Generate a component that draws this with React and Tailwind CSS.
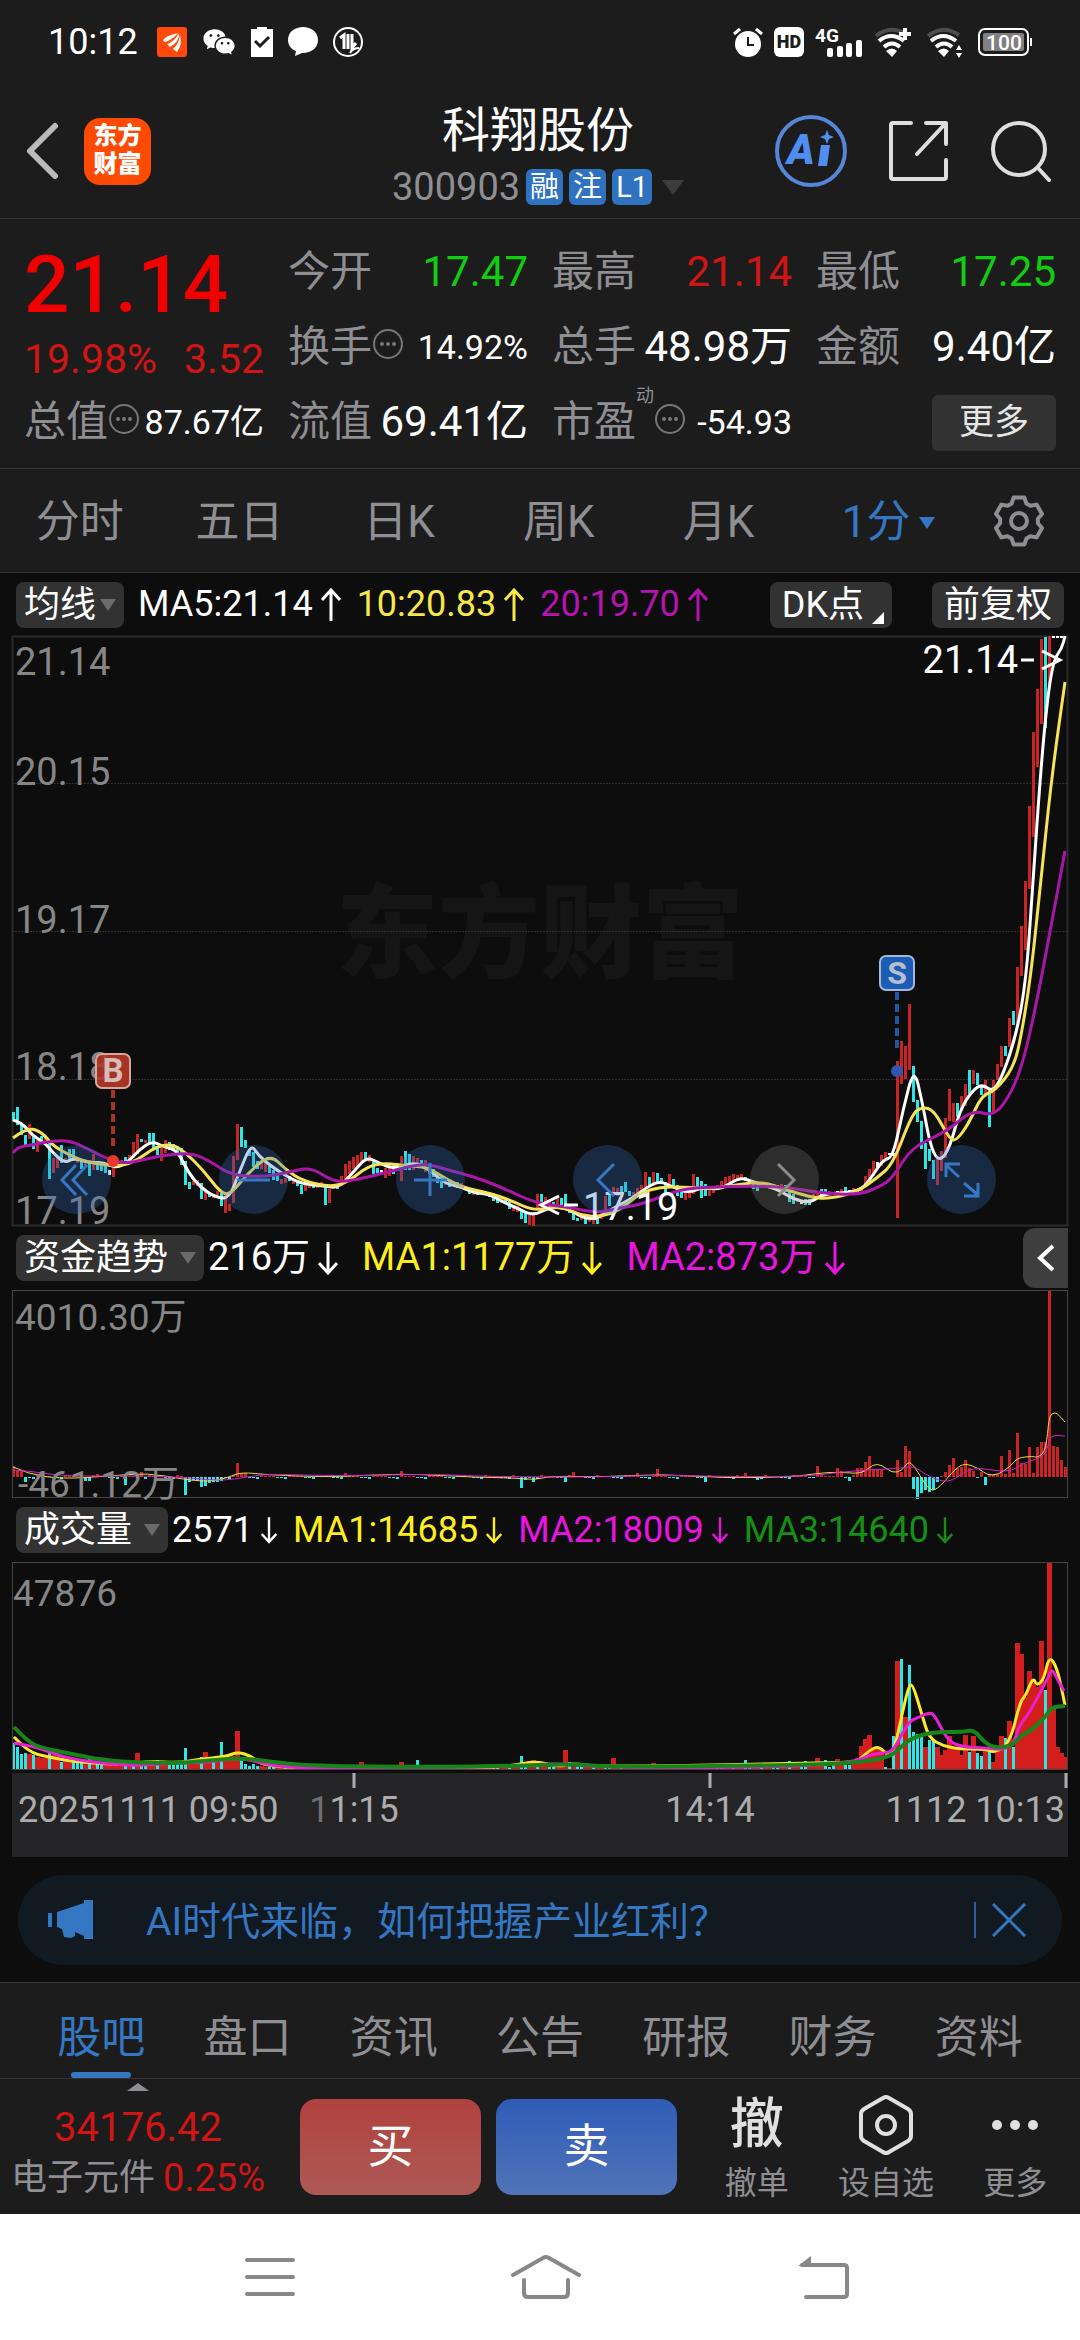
import React from "react";
import { RiWechatFill } from "react-icons/ri";

const RED = "#c92424";
const CYAN = "#2ee6e6";
const barColors = { r: RED, c: CYAN, w: "#ffffff" };

// one candle per 4px: colour, high, low
const candles = `
c476-485 c471-489 c488-499 c499-510 r488-503 c499-513 r502-516 c500-507 r501-507 c507-543 r522-537 r520-532
c509-527 r522-527 c513-524 c513-524 r523-527 c524-533 r526-529 c526-540 r518-534 c526-534 c527-535 c529-537
w534-539 r529-541 r524-531 r524-528 c521-527 r519-527 r506-522 r498-518 c503-506 r504-507 c497-508 c497-512
c510-519 r512-525 r504-517 c506-514 c508-515 c510-517 c512-529 c525-549 c546-553 r545-549 r544-550 c547-563
r555-564 c558-561 r558-562 r555-559 c557-570 r559-577 r568-575 r520-567 r488-524 c491-511 c504-512 c513-520
c516-531 c525-533 r526-533 r524-536 c530-537 c534-544 c538-545 r543-548 r542-547 c540-545 r543-548 c545-550
c549-558 r549-555 r547-552 c548-552 r547-552 r546-551 c550-569 r553-567 r548-553 c548-553 r540-550 r528-545
r525-538 r521-533 r519-531 r516-526 c516-524 r519-526 c524-538 c532-537 w534-537 r532-542 r530-540 c528-538
r527-534 r520-545 c515-534 c518-534 r520-534 r522-530 c524-532 r524-536 c528-538 c533-541 c538-547 c541-552
r545-549 c545-551 r545-549 c546-552 r547-551 c550-553 c552-558 r554-559 c554-559 r554-558 r555-559 c556-561
c557-565 c560-567 r562-567 c564-567 c565-573 r569-575 r570-576 c574-583 c576-587 r579-589 r579-590 r558-574
c558-566 r561-566 r564-571 c566-572 r562-570 c562-570 c558-572 c568-577 c575-584 c582-585 r580-584 c583-588
r583-586 r582-588 c582-588 r574-583 r560-577 c558-570 r551-560 r552-560 c550-558 c546-556 c555-560 r556-560
r552-560 r549-558 r536-552 c541-550 r536-550 c537-548 c542-548 c546-558 r538-548 c543-552 c549-560 c551-562
r552-564 r550-562 r538-558 c541-552 c545-562 c548-560 r552-560 r550-557 r549-554 r545-551 r541-549 r540-546
r538-545 r539-543 r538-542 c541-545 c543-547 c545-553 c547-555 r546-552 w549-551 r547-553 c548-553 c549-554
r548-554 c549-556 c555-566 c558-568 r562-566 w565-568 c563-569 c563-569 r558-564 r555-561 c553-560 c553-557
r555-559 r556-559 w555-557 r553-557 c551-556 w554-557 r552-556 w553-556 r551-555 r540-550 r533-545 r525-540
w526-532 r519-530 r516-524 w517-519 w517-520
r425-582 r405-448 r410-443 r368-434 c430-466 c464-486 c485-513 c507-533 c513-525 c524-543 r522-549 r515-535
r482-522 r453-485 r467-486 c467-481 r460-474 r448-470 c434-458 r434-448 c437-449 c449-459 r444-461 c454-491
r444-478 r428-444 r410-431 c410-420 r382-411 c375-389 r331-387 r290-340 r245-314 r170-253 r96-201 r53-131
r3-88 c1-92 r0-51 w0-2 w0-2 w0-2`.trim().split(/\s+/);

const ma5 = [[1,484],[9,486],[21,500],[33,507],[43,519],[53,527],[62,522],[78,527],[91,526],[103,532],[115,527],[127,514],[140,505],[152,511],[165,514],[176,536],[188,551],[203,561],[217,563],[227,537],[239,508],[246,519],[260,531],[281,544],[293,548],[312,550],[327,552],[343,534],[355,521],[367,527],[382,533],[403,526],[418,534],[432,547],[449,551],[463,557],[477,558],[491,566],[505,572],[521,580],[538,571],[555,572],[571,582],[585,583],[601,572],[621,562],[635,551],[648,545],[661,551],[676,557],[691,551],[708,554],[728,541],[741,546],[765,553],[781,563],[798,567],[811,558],[831,557],[850,554],[861,539],[871,524],[881,521],[891,474],[902,431],[910,465],[919,513],[928,526],[938,511],[948,474],[960,455],[970,448],[981,456],[991,439],[1005,396],[1014,344],[1020,262],[1027,157],[1034,75],[1041,25],[1050,12],[1053,0]];
const ma10 = [[1,502],[16,491],[31,497],[40,509],[57,519],[74,526],[107,531],[126,524],[143,511],[160,508],[174,517],[191,534],[208,556],[218,559],[236,537],[258,518],[274,534],[291,545],[319,551],[336,546],[356,530],[374,527],[394,530],[415,531],[436,544],[453,552],[477,557],[498,564],[522,575],[548,570],[568,579],[588,581],[608,574],[628,557],[648,551],[671,551],[701,553],[728,548],[751,546],[775,554],[798,561],[816,563],[845,556],[865,542],[881,528],[900,478],[910,471],[922,474],[938,504],[945,504],[957,487],[970,459],[983,455],[1002,431],[1010,396],[1020,331],[1031,222],[1041,131],[1053,46]];
const ma20 = [[1,517],[5,511],[21,509],[33,506],[57,504],[78,514],[102,526],[119,527],[150,519],[181,517],[201,527],[219,539],[250,541],[274,537],[298,531],[319,544],[332,546],[356,541],[384,534],[412,527],[436,534],[463,541],[491,552],[523,567],[555,571],[585,577],[608,572],[631,568],[668,553],[701,551],[741,550],[775,551],[808,557],[848,559],[871,549],[881,541],[900,511],[934,496],[960,474],[981,480],[996,463],[1010,431],[1024,370],[1038,296],[1053,215]];

// money flow, spikes of the quiet part by bar index, then every bar from 207 on
const flowSpikes = { 0: 11, 1: 7, 2: 6, 3: -5, 7: 5, 18: -4, 19: -4, 21: 3, 28: -8, 32: 5, 43: -18, 44: -5, 45: -3, 46: -4, 47: -10, 48: -9, 49: -6, 50: -5, 51: -5, 52: -4, 56: 14, 57: 4, 58: 4, 83: 4, 97: 6, 127: -11, 128: -3, 130: -5, 138: -5, 140: 5, 156: 4, 161: 8, 173: -5, 183: 4, 186: -3, 201: 11, 206: 9 };
const flowTail = [6, -1, -4, 2, 9, 9, 15, 21, 8, 8, 7, 0, 0, 0, 17, 5, 31, 26, -12, -22, -16, -13, -15, -13, -5, 1, 5, 12, 19, 9, 10, 17, 9, 6, -1, 5, -8, 3, 3, 3, 21, 3, 27, 4, 44, 14, 13, 30, 4, 30, 35, 35, 187, 31, 30, 17, 10];
const flow1 = [[1,177],[16,184],[50,189],[98,186],[136,183],[170,189],[195,192],[215,188],[229,182],[257,185],[319,187],[360,185],[401,184],[456,187],[505,188],[522,190],[539,186],[594,187],[649,184],[711,188],[780,187],[808,183],[828,182],[850,184],[861,174],[870,175],[880,183],[890,181],[897,170],[906,182],[918,202],[928,197],[943,179],[953,173],[968,179],[975,185],[986,185],[1000,175],[1005,168],[1021,166],[1026,168],[1034,160],[1037,127],[1041,123],[1045,123],[1053,132]];
const flow2 = [[1,180],[18,181],[50,186],[98,186],[140,186],[180,188],[210,191],[235,187],[255,184],[330,186],[420,184],[460,186],[520,187],[590,187],[650,185],[730,187],[800,186],[828,182],[858,180],[890,178],[903,176],[912,184],[936,194],[955,180],[968,178],[985,181],[1000,181],[1010,174],[1022,170],[1034,164],[1037,150],[1041,145],[1053,146]];

const volHead = "c27 c23 c16 c17 r16 c15 r13 r12 r12 c20 r15 r14 c8 r12 r9 c8 c7 c9 r8 c11 r9 c6 c6 r7 r5 r4 r5 r6 c4 r6 c7 r17 c5 c7 r8 r9 c10 r8 r6 c7 c7 c6 c8 c22 r10 r9 r11 c13 r18 r11 c10 r12 c28 r13 r12 r14 r39 c13 c6 c4 c6".split(" ");
const volSpikes = { 87: "r8", 101: "c10", 97: "r8", 127: "c14", 130: "r10", 138: "r20", 139: "c8", 150: "r12", 160: "r7", 183: "c10", 194: "c9", 198: "c9", 201: "r12", 203: "c10", 206: "r11" };
const volTail = "r8 c5 c5 r9 r12 r24 r31 r35 r23 r23 r20 c3 r2 c34 r109 c111 r53 c105 c38 c36 c35 r23 c30 c29 r23 r15 r20 r34 r23 r20 r15 r35 c18 r34 c17 c14 r20 c20 r8 r20 r34 c32 r49 c23 r127 r116 r73 r99 r87 r83 r129 c80 r207 r63 r23 r17 r13".split(" ");
const vol1 = [[2,175],[16,190],[36,195],[64,200],[115,203],[136,199],[167,201],[188,197],[212,195],[226,190],[239,194],[250,203],[284,206],[470,206],[498,204],[525,199],[546,205],[560,201],[587,205],[814,201],[842,200],[848,197],[858,188],[867,184],[877,195],[883,185],[891,148],[897,123],[901,123],[910,153],[917,176],[931,184],[948,187],[975,187],[982,191],[998,181],[1008,140],[1014,133],[1021,115],[1025,124],[1032,117],[1037,94],[1045,105],[1053,143]];
const vol2 = [[2,181],[22,184],[50,195],[80,200],[120,204],[160,201],[200,200],[220,196],[240,198],[265,205],[320,206],[500,205],[540,201],[600,206],[780,205],[842,200],[860,192],[875,191],[882,187],[890,172],[898,159],[905,156],[918,150],[923,154],[936,179],[950,185],[975,186],[990,188],[1001,183],[1008,162],[1016,153],[1034,120],[1040,106],[1045,117],[1052,129]];
const vol3 = [[2,165],[16,180],[30,186],[60,192],[90,198],[130,201],[170,201],[200,198],[232,196],[260,200],[300,204],[420,205],[500,204],[560,202],[600,205],[800,203],[850,200],[878,195],[890,184],[900,176],[920,170],[950,170],[962,168],[972,180],[982,186],[1000,184],[1008,174],[1020,168],[1034,154],[1040,145],[1053,144]];

const flowBars = Array.from({ length: 264 }, (_, i) => {
  if (i >= 207) return flowTail[i - 207];
  return flowSpikes[i] ?? [1, -1, 2, 1, -2, 1, -1][(i * 5) % 7];
});

const volBars = Array.from({ length: 264 }, (_, i) => {
  if (i >= 207) return volTail[i - 207];
  if (i < volHead.length) return volHead[i];
  return volSpikes[i] ?? ["r3", "c4", "r5", "c3", "r4", "r3", "c5"][(i * 3) % 7];
});

// smooth curve through the midpoints
const curve = (pts) => {
  let d = `M${pts[0][0]} ${pts[0][1]}`;
  for (let i = 1; i < pts.length - 1; i++) {
    const [x, y] = pts[i];
    const [nx, ny] = pts[i + 1];
    d += `Q${x} ${y} ${(x + nx) / 2} ${(y + ny) / 2}`;
  }
  const last = pts[pts.length - 1];
  return d + `L${last[0]} ${last[1]}`;
};

const gearPath = () => {
  const p = [];
  for (let k = 0; k < 6; k++) {
    [[-23, 19], [-13, 24], [13, 24], [23, 19]].forEach(([a, r]) => {
      const t = ((k * 60 - 90 + a) * Math.PI) / 180;
      p.push(`${(26 + r * Math.cos(t)).toFixed(1)} ${(26 + r * Math.sin(t)).toFixed(1)}`);
    });
  }
  return `M${p.join("L")}Z`;
};

const Line = ({ pts, color, width = 2 }) => (
  <path d={curve(pts)} fill="none" stroke={color} strokeWidth={width} strokeLinejoin="round" />
);

const Caret = ({ className = "" }) => (
  <svg viewBox="0 0 16 12" className={`w-4 h-3 shrink-0 ${className}`} fill="currentColor">
    <path d="M0 0h16L8 12z" />
  </svg>
);

const Arrow = ({ up, className = "w-5" }) => (
  <svg viewBox="0 0 20 34" className={`h-[34px] ${className}`} fill="none" stroke="currentColor" strokeWidth="3">
    {up ? <path d="M10 33V2M1 12l9-10 9 10" /> : <path d="M10 1v31M1 22l9 10 9-10" />}
  </svg>
);

const Value = ({ text, up, color, arrow }) => (
  <span className={`flex items-center gap-2 ${color}`}>
    {text}
    <Arrow up={up} className={arrow} />
  </span>
);

const Pill = ({ children, caret = true, className = "" }) => (
  <button className={`flex items-center h-[46px] px-2 rounded-lg bg-[#323232] text-white text-[36px] leading-none ${className}`}>
    {children}
    {caret && <Caret className="text-[#6b6b6b]" />}
  </button>
);

const Dots = () => (
  <svg viewBox="0 0 32 32" className="w-8 h-8 mb-2 shrink-0" fill="#77777b">
    <circle cx="16" cy="16" r="14" fill="none" stroke="#77777b" strokeWidth="2" />
    <circle cx="10" cy="16" r="2" /><circle cx="16" cy="16" r="2" /><circle cx="22" cy="16" r="2" />
  </svg>
);

const Quote = ({ label, value, color = "text-white", info, sup }) => (
  <div className="flex items-center justify-between h-[75px] whitespace-nowrap">
    <div className="flex items-center text-[42px] text-[#8e8e93]">
      {label}
      {sup && <sup className="text-[18px] self-start leading-none">{sup}</sup>}
      {info && <Dots />}
    </div>
    <div className={`${info ? "text-[34px]" : "text-[42px]"} ${color}`}>{value}</div>
  </div>
);

const Wifi = ({ children }) => (
  <svg viewBox="0 0 37 31" className="w-[37px] h-[31px]" fill="none" strokeWidth="4">
    <path d="M2 9Q17 -3 33 8" stroke="#4d4d4d" />
    <path d="M5 14q12-10 25 0M10 20q8-7 16 0" stroke="#fff" />
    <path d="M12 24q6-5 11 0l-5 6z" fill="#fff" />
    {children}
  </svg>
);

const StatusBar = () => (
  <div className="flex items-center justify-between h-[84px] pl-12 pr-12 text-white">
    <div className="flex items-center gap-[15px]">
      <span className="text-[36px] mr-1">10:12</span>
      <svg viewBox="0 0 30 30" className="w-[30px] h-[30px]">
        <rect width="30" height="30" rx="3" fill="#ff4a0c" />
        <path d="M6 14q1-5 15-8q-6 7-13 9zM10 17q7-2 12-11q1 8-9 14zM16 22q6-5 7-14q3 9-3 17z" fill="#fff" />
      </svg>
      <RiWechatFill className="w-[34px] h-[34px]" />
      <svg viewBox="0 0 22 30" className="w-[22px] h-[30px]">
        <path d="M0 2h6V0h10v2h6v28H0z" fill="#fff" />
        <path d="M4 14l5 5 9-9" fill="none" stroke="#1c1c1c" strokeWidth="3" />
      </svg>
      <svg viewBox="0 0 30 30" className="w-[30px] h-[30px]" fill="#fff">
        <path d="M15 0c8 0 15 5 15 13s-7 13-15 13h-1l-7 3 1-5C3 22 0 18 0 13 0 5 7 0 15 0z" />
      </svg>
      <svg viewBox="0 0 30 30" className="w-[30px] h-[30px]" fill="none" stroke="#fff" strokeWidth="2">
        <circle cx="15" cy="15" r="14" />
        <path d="M7 11l4-3v14M15 7v15M19 7v14l4-5" strokeWidth="3" />
        <path d="M17 26q3-5 9-5" />
      </svg>
    </div>
    <div className="flex items-center gap-[11px]">
      <svg viewBox="0 0 30 30" className="w-[30px] h-[30px]" fill="#fff">
        <circle cx="15" cy="17" r="13" />
        <path d="M1 7l6-5M29 7l-6-5" stroke="#fff" strokeWidth="3" />
        <path d="M15 10v8h6" fill="none" stroke="#1c1c1c" strokeWidth="2" />
      </svg>
      <span className="w-[30px] h-[30px] rounded-md bg-white text-[#1c1c1c] text-[18px] leading-[30px] text-center font-black">HD</span>
      <svg viewBox="0 0 48 32" className="w-12 h-8 overflow-visible" fill="#fff">
        <text x="0" y="16" fontSize="19" fontWeight="700">4G</text>
        <rect x="12" y="22" width="6" height="9" rx="2" /><rect x="22" y="20" width="6" height="11" rx="2" />
        <rect x="31" y="17" width="6" height="14" rx="2" /><rect x="41" y="14" width="6" height="17" rx="2" />
      </svg>
      <Wifi><path d="M25 7h12M31 1v12" stroke="#fff" /></Wifi>
      <div className="px-1"><Wifi><path d="M33 18l3 5h-6zM33 31l3-5h-6z" fill="#fff" /></Wifi></div>
      <svg viewBox="0 0 54 28" className="w-[54px] h-7">
        <rect x="1" y="1" width="49" height="26" rx="6" fill="none" stroke="#fff" strokeWidth="2" />
        <rect x="5" y="5" width="41" height="18" rx="2" fill="#808080" />
        <path d="M53 10v8" stroke="#fff" strokeWidth="2" />
        <text x="26" y="22" textAnchor="middle" fontSize="21" fontWeight="500" fill="#fff">100</text>
      </svg>
    </div>
  </div>
);

const Badge = ({ children }) => (
  <span className="h-9 min-w-9 px-1 rounded-md bg-[#2f72c0] text-white text-[29px] leading-9 text-center">{children}</span>
);

const Header = () => (
  <header className="grid grid-cols-[1fr_auto_1fr] items-center h-[135px] pl-6 pr-7 border-b border-[#333]">
    <div className="flex items-center gap-6">
      <button aria-label="返回">
        <svg viewBox="0 0 36 60" className="w-9 h-[60px]" fill="none" stroke="#bbb" strokeWidth="6" strokeLinecap="round" strokeLinejoin="round">
          <path d="M31 5L6 30l25 25" />
        </svg>
      </button>
      <div className="w-[67px] h-[67px] rounded-2xl bg-[#ff4a04] text-white text-[24px] leading-7 font-black text-center pt-1">
        东方<br />财富
      </div>
    </div>
    <div className="flex flex-col items-center gap-2 pt-1">
      <h1 className="text-[48px] leading-[60px] text-white">科翔股份</h1>
      <div className="flex items-center gap-[6px] text-[38px] leading-9 text-[#8e8e93]">
        300903
        <Badge>融</Badge>
        <Badge>注</Badge>
        <Badge>L1</Badge>
        <svg viewBox="0 0 22 15" className="w-[22px] h-[15px] ml-1" fill="#3c3c3c"><path d="M0 0h22L11 15z" /></svg>
      </div>
    </div>
    <div className="flex items-center justify-end gap-10">
      <button aria-label="AI">
        <svg viewBox="0 0 74 74" className="w-[74px] h-[74px]" fill="#4f8ef0">
          <circle cx="37" cy="37" r="34" fill="none" stroke="#5586d8" strokeWidth="4" />
          <text x="13" y="50" fontSize="42" fontWeight="900" fontStyle="italic">A</text>
          <path d="M47 31h9l-3 21h-9zM53 16l2 5 5 2-5 2-2 5-2-5-5-2 5-2z" />
        </svg>
      </button>
      <button aria-label="分享">
        <svg viewBox="0 0 62 62" className="w-[62px] h-[62px]" fill="none" stroke="#dedede" strokeWidth="4" strokeLinecap="round" strokeLinejoin="round">
          <path d="M23 3H5q-2 0-2 2v52q0 2 2 2h51q2 0 2-2V40M38 3h20v21M57 4L29 34" />
        </svg>
      </button>
      <button aria-label="搜索">
        <svg viewBox="0 0 62 62" className="w-[62px] h-[62px]" fill="none" stroke="#dedede" strokeWidth="4" strokeLinecap="round">
          <circle cx="29" cy="29" r="26" />
          <path d="M48 48l11 12" />
        </svg>
      </button>
    </div>
  </header>
);

const Quotes = () => (
  <section className="grid grid-cols-4 gap-x-6 px-6 pt-4 pb-2 border-b border-[#333]">
    <div className="row-span-2 text-[#e60f0f] whitespace-nowrap">
      <div className="text-[80px] leading-[100px] font-medium text-[#f00000]">21.14</div>
      <div className="flex justify-between text-[41px] leading-[48px] text-[#d01515]">
        <span>19.98%</span><span>3.52</span>
      </div>
    </div>
    <Quote label="今开" value="17.47" color="text-[#12cc12]" />
    <Quote label="最高" value="21.14" color="text-[#d01515]" />
    <Quote label="最低" value="17.25" color="text-[#12cc12]" />
    <Quote label="换手" value="14.92%" info />
    <Quote label="总手" value="48.98万" />
    <Quote label="金额" value="9.40亿" />
    <Quote label="总值" value="87.67亿" info />
    <Quote label="流值" value="69.41亿" />
    <Quote label="市盈" value="-54.93" info sup="动" />
    <button className="self-center justify-self-end w-[124px] h-14 rounded-md bg-[#323232] text-[#e6e6e6] text-[35px]">更多</button>
  </section>
);

const Periods = () => (
  <nav className="flex items-center h-[104px] text-[44px] text-[#8e8e93] border-b border-[#333]">
    <div className="grid grid-cols-6 flex-1 pt-1">
      {["分时", "五日", "日K", "周K", "月K"].map((t) => (
        <button key={t}>{t}</button>
      ))}
      <button className="flex items-center justify-center gap-2 pl-5 text-[#3677c4]">1分<Caret /></button>
    </div>
    <button aria-label="设置" className="w-[122px] flex justify-center">
      <svg viewBox="0 0 52 52" className="w-[52px] h-[52px]" fill="none" stroke="#8e8e93" strokeWidth="4" strokeLinejoin="round">
        <path d={gearPath()} />
        <circle cx="26" cy="26" r="8" />
      </svg>
    </button>
  </nav>
);

const RoundButton = ({ label, muted, children }) => (
  <button aria-label={label} className={`w-[69px] h-[69px] rounded-full ${muted ? "bg-[#787878]/30" : "bg-[#326ebe]/30"}`}>
    <svg viewBox="0 0 69 69" fill="none" stroke={muted ? "#8c8c8c" : "#3677c4"} strokeWidth="3">{children}</svg>
  </button>
);

const PriceChart = () => (
  <div className="relative mx-3">
    <svg viewBox="0 0 1056 590" className="block w-full overflow-visible">
      <text x="528" y="334" textAnchor="middle" fontSize="102" fontWeight="900" fill="#151515">东方财富</text>
      <rect x="0.5" y="0.5" width="1055" height="589" fill="none" stroke="#2a2a2a" strokeWidth="2" />
      <path d="M0 147.5h1056M0 295.5h1056M0 443.5h1056" stroke="#2e2e2e" strokeDasharray="2 1" />
      <g fontSize="38" fill="#868686">
        <text x="3" y="39">21.14</text>
        <text x="3" y="149">20.15</text>
        <text x="3" y="297">19.17</text>
        <text x="3" y="444">18.18</text>
        <text x="3" y="588">17.19</text>
      </g>
      {candles.map((c, i) => {
        const [top, bottom] = c.slice(1).split("-").map(Number);
        return <rect key={i} x={i * 4} y={top} width="3" height={bottom - top} fill={barColors[c[0]]} />;
      })}
      <Line pts={ma5} color="#ffffff" width={3} />
      <Line pts={ma10} color="#f6e35a" width={3} />
      <Line pts={ma20} color="#aa17a8" width={3} />
      <path d="M101 454v58" stroke="#a83226" strokeWidth="4" strokeDasharray="8 4" />
      <circle cx="101" cy="525" r="6" fill="#e8372c" />
      <rect x="84" y="418" width="34" height="34" rx="6" fill="#b53a29" fillOpacity="0.9" stroke="#d9a69d" strokeWidth="2" />
      <text x="101" y="446" textAnchor="middle" fontSize="33" fontWeight="700" fill="#d8bbb6">B</text>
      <path d="M885 356v56" stroke="#2257a0" strokeWidth="4" strokeDasharray="8 4" />
      <circle cx="885" cy="435" r="6" fill="#3156ad" />
      <rect x="868" y="320" width="34" height="34" rx="6" fill="#1c5cb4" stroke="#a3b8d6" strokeWidth="2" />
      <text x="885" y="348" textAnchor="middle" fontSize="32" fontWeight="700" fill="#b4bfcf">S</text>
      <g fontSize="38" fill="#fff">
        <text x="571" y="584">17.19</text>
        <text x="1006" y="37" textAnchor="end">21.14</text>
      </g>
      <path d="M547 560l-18 9 18 9M552 569h14M1009 24h13M1030 15l18 9-18 9" fill="none" stroke="#fff" strokeWidth="3" />
    </svg>
    <div className="absolute bottom-3 left-[30px] right-[72px] flex justify-between">
      <RoundButton label="最左"><path d="M34 20L20 35l14 15M45 20L31 35l14 15" /></RoundButton>
      <RoundButton label="缩小"><path d="M18 35h33" /></RoundButton>
      <RoundButton label="放大"><path d="M18 35h33M34 18v33" /></RoundButton>
      <RoundButton label="左移"><path d="M41 19L25 35l16 16" /></RoundButton>
      <RoundButton label="右移" muted><path d="M28 19l16 16-16 16" /></RoundButton>
      <RoundButton label="全屏"><path d="M32 32L19 20M19 32V19h14M37 38l14 12M51 38v13H37" /></RoundButton>
    </div>
  </div>
);

const FlowChart = () => (
  <svg viewBox="0 0 1056 208" className="block mx-3 w-[calc(100%-24px)] overflow-visible">
    {flowBars.map((v, i) => (
      <rect key={i} x={i * 4} y={v > 0 ? 187 - v : 187} width="3" height={Math.abs(v)} fill={v > 0 ? RED : CYAN} />
    ))}
    <Line pts={flow1} color="#ead94a" width={1} />
    <Line pts={flow2} color="#cf1fcb" width={1} />
    <rect x="0.5" y="0.5" width="1055" height="207" fill="none" stroke="#444" />
    <g fontSize="37" fill="#868686">
      <text x="3" y="40">4010.30万</text>
      <text x="6" y="207">-461.12万</text>
    </g>
  </svg>
);

const VolumeChart = () => (
  <svg viewBox="0 0 1056 208" className="block mx-3 w-[calc(100%-24px)]">
    {volBars.map((b, i) => {
      const h = Number(b.slice(1));
      const red = b[0] === "r";
      return <rect key={i} x={red ? i * 4 - 1 : i * 4} y={208 - h} width={red ? 5 : 3} height={h} fill={red ? "#d41d1d" : CYAN} />;
    })}
    <Line pts={vol1} color="#ffe92b" width={3} />
    <Line pts={vol2} color="#e81fd4" width={3} />
    <Line pts={vol3} color="#18851a" width={4} />
    <rect x="0.5" y="0.5" width="1055" height="207" fill="none" stroke="#444" />
    <text x="1" y="44" fontSize="37" fill="#868686">47876</text>
  </svg>
);

const TimeAxis = () => (
  <svg viewBox="0 0 1056 84" className="block mx-3 mt-[3px] w-[calc(100%-24px)] bg-[#242426]" fontSize="36" fill="#acacac">
    <path d="M342 0v15M698 0v15M1054 0v15" stroke="#acacac" strokeWidth="3" />
    <text x="6" y="49">20251111 09:50</text>
    <text x="342" y="49" textAnchor="middle"><tspan fill="#6f6f70">1</tspan>1:15</text>
    <text x="698" y="49" textAnchor="middle">14:14</text>
    <text x="1053" y="49" textAnchor="end">1112 10:13</text>
  </svg>
);

const Banner = () => (
  <div className="flex items-center mx-[18px] mt-[18px] mb-[17px] h-[90px] pl-[30px] pr-9 rounded-full bg-[#111921] text-[#3677c4]">
    <svg viewBox="0 0 46 40" className="w-[46px] h-10" fill="#3677c4">
      <path d="M0 13h4v14H0zM9 12L36 3V0h9v39h-9v-3l-9-4v4l-4 2-7-1-2-8-5-2z" />
    </svg>
    <a href="#" className="flex-1 pl-[52px] pt-1 text-[39px] whitespace-nowrap">AI时代来临，如何把握产业红利？</a>
    <button aria-label="关闭" className="flex items-center gap-4 border-l-2 border-[#2c5f9c] pl-4 h-9">
      <svg viewBox="0 0 34 34" className="w-[34px] h-[34px]" stroke="#3677c4" strokeWidth="3"><path d="M1 1l32 32M33 1L1 33" /></svg>
    </button>
  </div>
);

const InfoTabs = () => (
  <nav className="flex h-24 px-7 text-[44px] bg-[#1c1c1c] border-t border-[#3a3a3a] text-[#8e8e93]">
    {["股吧", "盘口", "资讯", "公告", "研报", "财务", "资料"].map((t, i) => (
      <button key={t} className={`relative flex-1 pt-4 ${i === 0 ? "text-[#3677c4]" : ""}`}>
        {t}
        {i === 0 && <span className="absolute bottom-0 left-1/2 -translate-x-1/2 w-[60px] h-[6px] rounded-full bg-[#3677c4]" />}
      </button>
    ))}
  </nav>
);

const Action = ({ label, children }) => (
  <button className="flex-1 flex flex-col items-center gap-2 pt-1 text-[32px] text-[#8e8e93]">
    <span className="flex items-center justify-center h-[60px] text-[54px] leading-none text-[#e0e0e0] font-medium">{children}</span>
    <span className="leading-10">{label}</span>
  </button>
);

const TradeBar = () => (
  <footer className="flex items-center h-[136px] bg-[#1c1c1c] border-t border-[#333]">
    <div className="relative w-[276px] mr-6 pt-3 text-center text-[#d01515] whitespace-nowrap">
      <svg viewBox="0 0 22 8" className="absolute -top-2 left-1/2 w-[22px] h-2 -translate-x-1/2" fill="#8e8e93"><path d="M11 0l11 8H0z" /></svg>
      <div className="text-[40px] leading-[50px]">34176.42</div>
      <div className="flex items-center justify-center gap-2 text-[38px] leading-[50px]">
        <span className="text-[36px] text-[#8e8e93]">电子元件</span>0.25%
      </div>
    </div>
    <div className="flex gap-[15px]">
      <button className="w-[181px] h-24 rounded-2xl bg-linear-to-b from-[#b0413e] to-[#ae5955] text-white text-[46px]">买</button>
      <button className="w-[181px] h-24 rounded-2xl bg-linear-to-b from-[#2f5cb8] to-[#5173b8] text-white text-[46px]">卖</button>
    </div>
    <div className="flex flex-1 pl-[15px]">
      <Action label="撤单">撤</Action>
      <Action label="设自选">
        <svg viewBox="0 0 56 60" className="w-14 h-[60px]" fill="none" stroke="#e0e0e0" strokeWidth="4" strokeLinejoin="round">
          <path d="M25 3q3-2 6 0l19 11q3 2 3 5v22q0 3-3 5L31 57q-3 2-6 0L6 46q-3-2-3-5V19q0-3 3-5z" />
          <circle cx="28" cy="30" r="9" />
        </svg>
      </Action>
      <Action label="更多">
        <svg viewBox="0 0 48 12" className="w-12 h-3" fill="#e0e0e0">
          <circle cx="6" cy="6" r="5" /><circle cx="24" cy="6" r="5" /><circle cx="42" cy="6" r="5" />
        </svg>
      </Action>
    </div>
  </footer>
);

const SystemNav = () => (
  <div className="flex items-center justify-between h-[126px] pl-[244px] pr-[230px] bg-white">
    <button aria-label="菜单">
      <svg viewBox="0 0 52 40" className="w-[52px] h-10" stroke="#888" strokeWidth="4" strokeLinecap="round"><path d="M3 3h46M3 20h46M3 37h46" /></svg>
    </button>
    <button aria-label="主页">
      <svg viewBox="0 0 72 46" className="w-[72px] h-[46px]" fill="none" stroke="#888" strokeWidth="4" strokeLinecap="round" strokeLinejoin="round">
        <path d="M3 21L33 4q3-2 6 0l30 17M14 26v13q0 4 4 4h36q4 0 4-4V26" />
      </svg>
    </button>
    <button aria-label="后退">
      <svg viewBox="0 0 54 44" className="w-[54px] h-11" fill="none" stroke="#888" strokeWidth="4" strokeLinecap="round" strokeLinejoin="round">
        <path d="M6 10h42q3 0 3 3v26q0 3-3 3H10" />
        <path d="M15 1v10H2z" fill="#888" stroke="none" />
      </svg>
    </button>
  </div>
);

const App = () => {
  return (
    <div className="w-full bg-[#0d0d0d] leading-tight font-['Roboto','Noto_Sans_CJK_SC',sans-serif]">
      <div className="bg-[#1c1c1c]">
        <StatusBar />
        <Header />
        <Quotes />
        <Periods />
      </div>
      <div className="flex items-center h-[63px] px-4 text-[36px] whitespace-nowrap">
        <Pill className="gap-1">均线</Pill>
        <div className="flex flex-1 gap-4 pl-[14px]">
          <Value text="MA5:21.14" up color="text-white" arrow="w-5" />
          <Value text="10:20.83" up color="text-[#f6e84b]" arrow="w-5" />
          <Value text="20:19.70" up color="text-[#b414b0]" arrow="w-5" />
        </div>
        <div className="flex gap-10">
          <Pill caret={false} className="gap-2 pl-3">
            DK点
            <svg viewBox="0 0 12 12" className="w-3 h-3 self-end mb-1" fill="#fff"><path d="M12 0v12H0z" /></svg>
          </Pill>
          <Pill caret={false} className="px-3">前复权</Pill>
        </div>
      </div>
      <PriceChart />
      <div className="flex items-center h-16 pl-4 pr-3 text-[38px] whitespace-nowrap">
        <Pill className="gap-3">资金趋势</Pill>
        <div className="flex flex-1 gap-6 pl-1">
          <Value text="216万" color="text-white" arrow="w-5" />
          <Value text="MA1:1177万" color="text-[#ffee1f]" arrow="w-5" />
          <Value text="MA2:873万" color="text-[#e815e0]" arrow="w-5" />
        </div>
        <button aria-label="展开" className="flex items-center justify-center w-[45px] h-[60px] rounded-l-xl bg-[#3e3e3e]">
          <svg viewBox="0 0 18 28" className="w-[18px] h-7" fill="none" stroke="#fff" strokeWidth="4"><path d="M16 2L3 14l13 12" /></svg>
        </button>
      </div>
      <FlowChart />
      <div className="flex items-center h-16 px-4 text-[36px] whitespace-nowrap">
        <Pill className="gap-3">成交量</Pill>
        <div className="flex gap-4 pl-1">
          <Value text="2571" color="text-white" arrow="w-4" />
          <Value text="MA1:14685" color="text-[#ffee1f]" arrow="w-4" />
          <Value text="MA2:18009" color="text-[#e815e0]" arrow="w-4" />
          <Value text="MA3:14640" color="text-[#159015]" arrow="w-4" />
        </div>
      </div>
      <VolumeChart />
      <TimeAxis />
      <Banner />
      <InfoTabs />
      <TradeBar />
      <SystemNav />
    </div>
  );
};

export default App;
